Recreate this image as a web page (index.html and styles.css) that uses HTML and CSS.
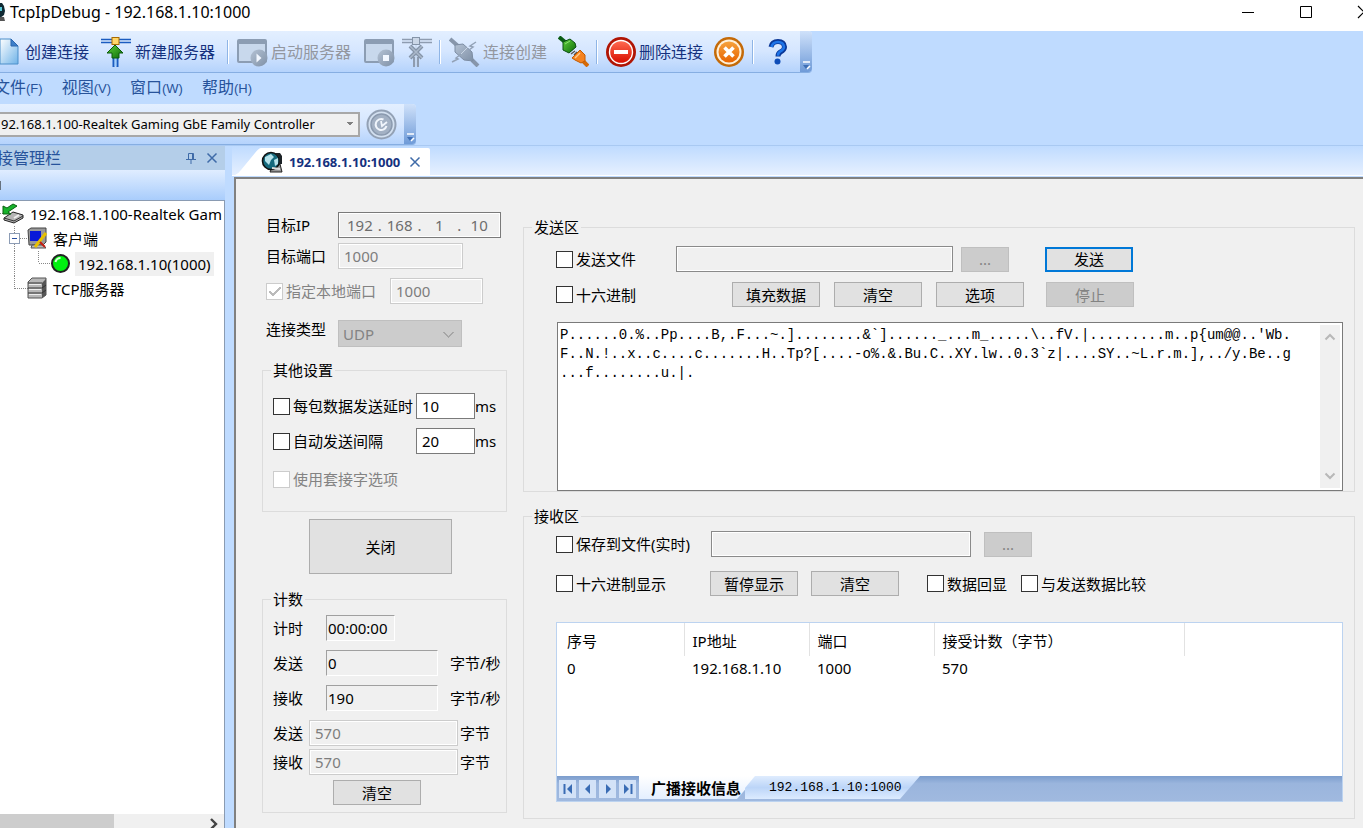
FILE: index.html
```html
<!DOCTYPE html>
<html lang="zh-CN">
<head>
<meta charset="utf-8">
<title>TcpIpDebug - 192.168.1.10:1000</title>
<link rel="stylesheet" href="styles.css">
</head>
<body>
<svg width="0" height="0" class="defs" aria-hidden="true">
  <defs>
    <linearGradient id="page" x1="0" y1="0" x2="1" y2="1"><stop offset="0" stop-color="#fff"/><stop offset="1" stop-color="#6fb3e8"/></linearGradient>
    <linearGradient id="green" x1="0" y1="0" x2="1" y2="1"><stop offset="0" stop-color="#5fd03a"/><stop offset="1" stop-color="#0c6b0a"/></linearGradient>
    <linearGradient id="red" x1="0" y1="0" x2="0" y2="1"><stop offset="0" stop-color="#ff6a50"/><stop offset="1" stop-color="#d80f00"/></linearGradient>
    <linearGradient id="orange" x1="0" y1="0" x2="0" y2="1"><stop offset="0" stop-color="#f6a23c"/><stop offset="1" stop-color="#e86400"/></linearGradient>
    <linearGradient id="grey" x1="0" y1="0" x2="1" y2="1"><stop offset="0" stop-color="#b4c2d4"/><stop offset="1" stop-color="#7f90a6"/></linearGradient>
  </defs>
</svg>

<header class="titlebar">
  <svg class="app-icon" width="6" height="22" viewBox="0 0 6 22"><path d="M0 2h2l2 3 1 5-1 4-4 3z" fill="#102a33"/><path d="M0 6h2v4H0z" fill="#58c8d8"/><path d="M0 16h4l1 4H0z" fill="#555"/></svg>
  <h1 class="title">TcpIpDebug - 192.168.1.10:1000</h1>
  <div class="window-buttons">
    <button type="button" aria-label="最小化"><svg width="14" height="14"><path d="M1 7.500h12" stroke="#000"/></svg></button>
    <button type="button" aria-label="最大化"><svg width="14" height="14"><path d="M1.500 1.500h11v11h-11z" fill="none" stroke="#000"/></svg></button>
    <button type="button" aria-label="关闭窗口"><svg width="14" height="14"><path d="M1 1l12 12M13 1L1 13" stroke="#000" stroke-width="1.200"/></svg></button>
  </div>
</header>

<div class="toolbar main-toolbar" role="toolbar">
  <button type="button" class="tool new-conn"><svg width="19" height="30" viewBox="0 0 19 30"><path d="M0 2h11l7 7v18H0z" fill="url(#page)" stroke="#4d8fca"/><path d="M11 2v7h7z" fill="#3d7fc9" stroke="#2c66ae"/></svg>创建连接</button>
  <button type="button" class="tool new-server"><svg width="30" height="30" viewBox="0 0 30 30"><path d="M0 2.500h30M0 5.500h30" stroke="#1b5cc0" stroke-width="1.600"/><path d="M12.500 20v10M16.500 20v10" stroke="#1b5cc0" stroke-width="2"/><path d="M14.500 8v21" stroke="#9fd0ff" stroke-width="1.500"/><rect x="11" y=".5" width="7" height="7" fill="#ffd76a" stroke="#a86b00"/><path d="M14 8l8 8h-4v5h-7v-5H6z" fill="url(#green)" stroke="#0a5a0a"/></svg>新建服务器</button>
  <span class="sep"></span>
  <button type="button" class="tool start" disabled><svg width="31" height="30" viewBox="0 0 31 30"><rect x="1" y="3" width="28" height="22" rx="1" fill="#c8d8ec" stroke="#8c9db3" stroke-width="2"/><path d="M1 5h28" stroke="#8c9db3" stroke-width="4"/><circle cx="22" cy="21" r="8.500" fill="url(#grey)"/><path d="M19.500 16.500l5 4.500-5 4.500z" fill="#f2f7ff"/></svg>启动服务器</button>
  <button type="button" class="tool icon-a" disabled aria-label="停止服务器"><svg width="31" height="30" viewBox="0 0 31 30"><rect x="1" y="3" width="28" height="22" rx="1" fill="#c8d8ec" stroke="#8c9db3" stroke-width="2"/><path d="M1 5h28" stroke="#8c9db3" stroke-width="4"/><circle cx="22" cy="21" r="8.500" fill="url(#grey)"/><rect x="19" y="18" width="6" height="6" fill="#f2f7ff"/></svg></button>
  <button type="button" class="tool icon-b" disabled aria-label="删除服务器"><svg width="30" height="30" viewBox="0 0 30 30"><path d="M0 2.500h30M0 5.500h30" stroke="#8e9cb0" stroke-width="1.600"/><path d="M12 20v10M16 20v10" stroke="#8e9cb0" stroke-width="2"/><path d="M14 8v21" stroke="#c2d0e2"/><rect x="10.500" y=".5" width="7" height="7" fill="#cbd7e7" stroke="#8594a8"/><path d="M8 9l12 12M20 9L8 21" stroke="#8594a8" stroke-width="4"/><path d="M8 9l12 12M20 9L8 21" stroke="#aab8ca" stroke-width="1.500"/></svg></button>
  <span class="sep"></span>
  <button type="button" class="tool link" disabled><svg width="31" height="30" viewBox="0 0 31 30"><path d="M1 2l8 7M23 23l6 6" stroke="#8796ab" stroke-width="4"/><path d="M6 8l8-1 9 8 1 9-9-1-9-8z" fill="url(#grey)" stroke="#7d8da3"/><path d="M10 19l9-9" stroke="#c9d5e4"/><path d="M27 5l-6 4 3 1-4 3M3 25l6-3-2-1 5-4" fill="none" stroke="#93a2b7" stroke-width="1.500"/></svg>连接创建</button>
  <button type="button" class="tool unlink" aria-label="断开连接"><svg width="31" height="31" viewBox="0 0 31 31"><path d="M1 1l6 5" stroke="#0b5d14" stroke-width="4"/><path d="M11 16l4-3M13 18l4-3M16 19l3-3" stroke="#555" stroke-width="1.400"/><path d="M5 6l7-3 5 4 1 4-7 6-6-3z" fill="url(#green)" stroke="#0a4f12"/><path d="M7 8l5-3" stroke="#8be070"/><path d="M24 24l6 6" stroke="#d56a08" stroke-width="4"/><path d="M22 14l5 5v6l-4 2-6-3-3-2z" fill="#f58220" stroke="#c25a00"/><path d="M22 17l-5 5" stroke="#ffc98c" stroke-width="1.500"/></svg></button>
  <span class="sep"></span>
  <button type="button" class="tool delete"><svg width="30" height="30" viewBox="0 0 30 30"><circle cx="15" cy="15" r="15" fill="#b01505"/><circle cx="15" cy="15" r="12.200" fill="#fff"/><circle cx="15" cy="15" r="10.800" fill="url(#red)"/><path d="M8 15h14" stroke="#fff" stroke-width="4"/></svg>删除连接</button>
  <button type="button" class="tool icon-c" aria-label="全部删除"><svg width="30" height="30" viewBox="0 0 30 30"><circle cx="15" cy="15" r="15" fill="#c46a08"/><circle cx="15" cy="15" r="12.500" fill="#fff0d8"/><circle cx="15" cy="15" r="10.500" fill="url(#orange)"/><path d="M10.500 10.500l9 9M19.500 10.500l-9 9" stroke="#fff" stroke-width="3.600"/></svg></button>
  <span class="sep"></span>
  <button type="button" class="tool help" aria-label="帮助"><svg width="20" height="26" viewBox="0 0 20 26"><path d="M3 8q1-5.500 7-5.500T16.500 8q0 3-4 5-2.500 1.500-2.500 4.500" fill="none" stroke="#0a3796" stroke-width="5"/><path d="M3.500 8Q4.500 3 10 3t6 5q0 2.500-4 4.700-2 1.300-2 4" fill="none" stroke="#1e74e8" stroke-width="2.600"/><circle cx="9.500" cy="22.500" r="3" fill="#0f4db8"/></svg></button>
  <span class="grip"><svg width="12" height="12" viewBox="0 0 12 12"><path d="M3 2h7" stroke="#fff" stroke-width="1.500"/><path d="M3 5h6l-3 4z" fill="#3f6fb5"/><path d="M7 9l3-3" stroke="#fff" stroke-width="1.500"/></svg></span>
</div>

<nav class="menu">
  <a href="#">文件<small>(F)</small></a>
  <a href="#">视图<small>(V)</small></a>
  <a href="#">窗口<small>(W)</small></a>
  <a href="#">帮助<small>(H)</small></a>
</nav>

<div class="toolbar adapter-toolbar">
  <select class="adapter" aria-label="网卡"><option>92.168.1.100-Realtek Gaming GbE Family Controller</option></select>
  <button type="button" class="tool refresh" disabled aria-label="刷新"><svg width="31" height="31" viewBox="0 0 31 31"><circle cx="15.500" cy="15.500" r="14" fill="#d3e0f0" stroke="#93a1b5" stroke-width="2"/><circle cx="15.500" cy="15.500" r="10.500" fill="#a3b1c4" stroke="#8b9aaf" stroke-width="1.500"/><path d="M20.500 17a5.500 5.500 0 1 1-3-6.500" fill="none" stroke="#f0f5fc" stroke-width="2"/><path d="M15 12l1 5 5-4" fill="none" stroke="#f0f5fc" stroke-width="1.800"/></svg></button>
  <span class="grip"><svg width="12" height="12" viewBox="0 0 12 12"><path d="M3 2h7" stroke="#fff" stroke-width="1.500"/><path d="M3 5h6l-3 4z" fill="#3f6fb5"/><path d="M7 9l3-3" stroke="#fff" stroke-width="1.500"/></svg></span>
</div>

<div class="workspace">
  <aside class="sidebar">
    <div class="side-head">
      <h2>接管理栏</h2>
      <button type="button" aria-label="固定"><svg width="12" height="12" viewBox="0 0 12 12"><path d="M3.500 7V1.500h5V7M1 7.500h10M6 8v4" fill="none" stroke="#3f6ba8"/><path d="M7.500 2v5" stroke="#3f6ba8"/></svg></button>
      <button type="button" aria-label="关闭栏"><svg width="12" height="12" viewBox="0 0 12 12"><path d="M1.500 1.500l9 9M10.500 1.500l-9 9" stroke="#3f6ba8" stroke-width="1.500"/></svg></button>
    </div>
    <div class="side-tools"><i></i></div>
    <div class="tree-box">
      <ul class="tree">
        <li><svg width="28" height="25" viewBox="0 0 28 25"><path d="M0 12.500h4" stroke="#888" stroke-dasharray="1 1"/><path d="M4 17l9-6 10 3v3l-9 5-10-3z" fill="#b5b5b5" stroke="#222"/><path d="M4 17l10 3 9-5" fill="none" stroke="#333"/><path d="M14 17l5-3" stroke="#eee" stroke-width="2"/><path d="M3 5v8h8l-3-2 9-6-4-2-6 4z" fill="#18b32c" stroke="#08600f"/></svg><span>192.168.1.100-Realtek Gam</span></li>
        <li><svg width="51" height="25" viewBox="0 0 51 25"><path d="M14.500 0v25M20 12.500h8" stroke="#888" stroke-dasharray="1 1"/><rect x="9.500" y="7.500" width="10" height="10" fill="#fff" stroke="#8c9cb5"/><path d="M12 12.500h5" stroke="#2a4fa0"/><path d="M28 4l3-2h15v14l-3 3H29z" fill="#999" stroke="#444"/><path d="M30 5h11v10H30z" fill="#0818d8"/><path d="M32 19h11l3 3H31z" fill="#bbb" stroke="#555"/><path d="M35 21L46 7" stroke="#e8c000" stroke-width="3"/><path d="M40 16l5 5" stroke="#c41d10" stroke-width="2"/></svg><span>客户端</span></li>
        <li><svg width="73" height="25" viewBox="0 0 73 25"><path d="M14.500 0v25M38.500 0v12M39 12.500h13" stroke="#888" stroke-dasharray="1 1"/><circle cx="60.500" cy="12.500" r="8.500" fill="#00f010" stroke="#222" stroke-width="2"/><path d="M55.500 11q1-4 5-4" stroke="#d8ffd8" stroke-width="2" fill="none"/></svg><span class="selected">192.168.1.10(1000)</span></li>
        <li><svg width="51" height="25" viewBox="0 0 51 25"><path d="M14.500 0v13M15 12.500h13" stroke="#888" stroke-dasharray="1 1"/><path d="M28 6l4-4h14v17l-4 3H28z" fill="#b8b8b8" stroke="#555"/><path d="M42 7l4-4v16l-4 3z" fill="#555"/><path d="M28 7h14M28 12h14l4-3M28 17h14l4-3" stroke="#333" fill="none"/><path d="M29 8.500h12M29 13.500h12M29 18.500h12" stroke="#eee"/></svg><span>TCP服务器</span></li>
      </ul>
      <div class="hscroll"><i></i><svg width="10" height="12" viewBox="0 0 10 12"><path d="M2 1l5 5-5 5" fill="none" stroke="#444" stroke-width="2.400"/></svg></div>
    </div>
  </aside>

  <main class="document">
    <div class="doc-tabs">
      <svg class="slope" width="26" height="27" viewBox="0 0 26 27"><path d="M0 27Q3 26 6 22L20 5Q24 0 26 0V27z" fill="#fff"/></svg>
      <div class="doc-tab">
        <svg width="22" height="22" viewBox="0 0 22 22"><path d="M12 14l7-1 2 8H9z" fill="#999" stroke="#222"/><circle cx="10" cy="10" r="8.500" fill="#15697c" stroke="#111" stroke-width="1.600"/><path d="M4 6l6-3 3 3-3 3-2 5-4-4zM13 9l4-2v6l-3 2z" fill="#b6e2ea"/><path d="M13 2h6l2 3v8h-3V6z" fill="#1b2226"/><path d="M11 17l8 1" stroke="#ddd" stroke-width="2"/></svg>
        <a href="#">192.168.1.10:1000</a>
        <button type="button" aria-label="关闭标签"><svg width="12" height="12" viewBox="0 0 12 12"><path d="M1.500 1.500l9 9M10.500 1.500l-9 9" stroke="#3f6ba8" stroke-width="1.500"/></svg></button>
      </div>
    </div>

    <div class="panel">
      <form class="left">
        <div class="target">
          <span>目标IP</span>
          <div class="ip"><input aria-label="IP 第1段" value="192" disabled>.<input aria-label="IP 第2段" value="168" disabled>.<input aria-label="IP 第3段" value="1" disabled>.<input aria-label="IP 第4段" value="10" disabled></div>
        </div>
        <div class="target port"><label for="port">目标端口</label><input id="port" class="field w-port" value="1000" disabled></div>
        <div class="target local"><label class="check off"><input type="checkbox" checked disabled>指定本地端口</label><input class="field w-local" aria-label="本地端口" value="1000" disabled></div>
        <div class="target type"><label for="type">连接类型</label><select id="type" class="type-select" disabled><option>UDP</option></select></div>

        <fieldset class="group settings">
          <legend>其他设置</legend>
          <div class="row"><label class="check"><input type="checkbox">每包数据发送延时</label><input class="field small" aria-label="延时" value="10">ms</div>
          <div class="row"><label class="check"><input type="checkbox">自动发送间隔</label><input class="field small" aria-label="间隔" value="20">ms</div>
          <div class="row"><label class="check off"><input type="checkbox" disabled>使用套接字选项</label></div>
        </fieldset>

        <button type="button" class="btn close-btn">关闭</button>

        <fieldset class="group counts">
          <legend>计数</legend>
          <div class="row"><label for="t">计时</label><output id="t" class="sunken time">00:00:00</output></div>
          <div class="row"><label for="s">发送</label><output id="s" class="sunken">0</output><span class="rate">字节/秒</span></div>
          <div class="row"><label for="r">接收</label><output id="r" class="sunken">190</output><span class="rate">字节/秒</span></div>
          <div class="row total"><label for="ts">发送</label><input id="ts" class="field" value="570" disabled>字节</div>
          <div class="row total"><label for="tr">接收</label><input id="tr" class="field" value="570" disabled>字节</div>
          <button type="button" class="btn">清空</button>
        </fieldset>
      </form>

      <div class="right">
        <fieldset class="group send">
          <legend>发送区</legend>
          <div class="row"><label class="check c1"><input type="checkbox">发送文件</label><input class="field file" aria-label="发送文件路径" disabled><button type="button" class="btn browse" disabled>...</button><button type="button" class="btn primary">发送</button></div>
          <div class="row r2"><label class="check c2"><input type="checkbox">十六进制</label><button type="button" class="btn">填充数据</button><button type="button" class="btn">清空</button><button type="button" class="btn">选项</button><button type="button" class="btn stop" disabled>停止</button></div>
          <div class="editor">
            <textarea aria-label="发送数据" spellcheck="false">P......0.%..Pp....B,.F...~.]........&amp;`]......_...m_.....\..fV.|.........m..p{um@@..'Wb.
F..N.!..x..c....c.......H..Tp?[....-o%.&amp;.Bu.C..XY.lw..0.3`z|....SY..~L.r.m.],../y.Be..g
...f........u.|.</textarea>
            <div class="vscroll"><svg width="12" height="8" viewBox="0 0 12 8"><path d="M1.500 6.500L6 2l4.500 4.500" fill="none" stroke="#b8b8b8" stroke-width="2"/></svg><svg width="12" height="8" viewBox="0 0 12 8"><path d="M1.500 1.500L6 6l4.500-4.500" fill="none" stroke="#b8b8b8" stroke-width="2"/></svg></div>
          </div>
        </fieldset>

        <fieldset class="group receive">
          <legend>接收区</legend>
          <div class="row"><label class="check c3"><input type="checkbox">保存到文件(实时)</label><input class="field save" aria-label="保存路径" disabled><button type="button" class="btn browse" disabled>...</button></div>
          <div class="row r2"><label class="check c4"><input type="checkbox">十六进制显示</label><button type="button" class="btn">暂停显示</button><button type="button" class="btn">清空</button><label class="check echo"><input type="checkbox">数据回显</label><label class="check"><input type="checkbox">与发送数据比较</label></div>
          <div class="grid">
            <div class="grid-body">
              <table>
                <colgroup><col class="k1"><col class="k2"><col class="k2"><col class="k3"><col></colgroup>
                <thead><tr><th><span>序号</span></th><th><span>IP地址</span></th><th><span>端口</span></th><th><span>接受计数（字节）</span></th><th></th></tr></thead>
                <tbody><tr><td>0</td><td>192.168.1.10</td><td>1000</td><td>570</td><td></td></tr></tbody>
              </table>
            </div>
            <div class="sheet-bar">
              <button type="button" aria-label="首页"><svg width="12" height="12"><path d="M2.500 1v10" stroke="#3a6cb4" stroke-width="2"/><path d="M10 1v10L5 6z" fill="#3a6cb4"/></svg></button>
              <button type="button" aria-label="上一页"><svg width="12" height="12"><path d="M8 1v10L3 6z" fill="#3a6cb4"/></svg></button>
              <button type="button" aria-label="下一页"><svg width="12" height="12"><path d="M4 1v10l5-5z" fill="#3a6cb4"/></svg></button>
              <button type="button" aria-label="末页"><svg width="12" height="12"><path d="M9.500 1v10" stroke="#3a6cb4" stroke-width="2"/><path d="M2 1v10l5-5z" fill="#3a6cb4"/></svg></button>
              <a href="#" class="sheet active">广播接收信息</a>
              <a href="#" class="sheet other">192.168.1.10:1000</a>
            </div>
          </div>
        </fieldset>
      </div>
    </div>
  </main>
</div>
</body>
</html>
```
FILE: styles.css
```css
* { box-sizing: border-box; }
html, body { height: 100%; }
body {
  margin: 0;
  display: flex;
  flex-direction: column;
  overflow: hidden;
  background: #bfdbff;
  color: #000;
  font: 15px/18px "Noto Sans", "Noto Sans CJK SC", sans-serif;
}
button, input, select, textarea { font: inherit; color: inherit; margin: 0; }
button { padding: 0; border: 0; background: none; }
svg { display: block; flex: none; }
a { color: inherit; text-decoration: none; }
h1, h2 { margin: 0; font-weight: 400; }
ul { margin: 0; padding: 0; list-style: none; }
.defs { position: absolute; }

.titlebar { flex: none; height: 31px; display: flex; align-items: center; background: #fff; padding-bottom: 7px; overflow: hidden; }
.app-icon { margin-right: 4px; }
.title { font-size: 16px; flex: 1; }
.window-buttons { display: flex; gap: 44px; margin-right: -8px; }

.toolbar {
  flex: none;
  display: flex;
  align-items: center;
  align-self: flex-start;
  height: 42px;
  background: linear-gradient(#e3efff, #d5e6ff 50%, #b5d3fc);
  border-bottom: 1px solid #86aee2;
  border-radius: 0 4px 4px 0;
}
.adapter-toolbar { height: 41px; }
.tool { display: flex; align-items: center; font-size: 16px; color: #15317e; white-space: nowrap; }
.tool:disabled { color: #93979f; }
.new-conn svg { margin-right: 6px; }
.new-server { margin-left: 12px; }
.new-server svg { margin-right: 4px; }
.sep { width: 2px; height: 24px; background: #8fb5e6; border-right: 1px solid #fff; margin: 0 8px 0 12px; }
.start svg { margin-right: 3px; }
.icon-a { margin-left: 13px; }
.icon-b { margin-left: 7px; }
.icon-b + .sep { margin-left: 7px; }
.link svg, .delete svg { margin-right: 3px; }
.unlink { margin-left: 11px; }
.unlink + .sep { margin-left: 7px; }
.icon-c { margin-left: 11px; }
.icon-c + .sep { margin-left: 8px; }
.help { margin: 0 12px 0 6px; }
.grip { align-self: stretch; width: 12px; display: flex; align-items: flex-end; background: linear-gradient(#cfe1fa, #6f9bd8); border-radius: 0 4px 4px 0; }

.menu { flex: none; display: flex; gap: 19px; height: 31px; align-items: center; padding-bottom: 3px; color: #27539b; font-size: 16px; margin-left: -6px; }
.menu small { font: 13px "Liberation Sans", sans-serif; }

.adapter {
  appearance: none;
  width: 360px;
  height: 25px;
  padding: 0 0 0 1px;
  border: 2px solid #a8a8a8;
  border-left: 0;
  border-radius: 0;
  font-size: 13px;
  background: linear-gradient(#808080, #808080) 347px 8px / 6px 1px no-repeat, linear-gradient(#808080, #808080) 348px 9px / 4px 1px no-repeat, linear-gradient(#808080, #808080) 349px 10px / 2px 1px no-repeat, #f0f0f0;
}
.refresh { margin: 0 7px 0 6px; }

.workspace { flex: 1; min-height: 0; display: flex; gap: 7px; border-top: 1px solid #a9c9f2; }
.sidebar { flex: none; width: 225px; display: flex; flex-direction: column; }
.side-head { height: 24px; display: flex; align-items: center; gap: 9px; padding-right: 7px; background: #b4cee9; color: #27539b; overflow: hidden; }
.side-head h2 { flex: 1; font-size: 16px; white-space: nowrap; margin-left: -3px; }
.side-tools { height: 31px; background: linear-gradient(#e0edff, #a9cdfc); border-bottom: 1px solid #8a9bb2; display: flex; align-items: center; }
.side-tools i { width: 1px; height: 9px; background: #66727f; }
.tree-box { flex: 1; display: flex; flex-direction: column; justify-content: space-between; background: #fff; border-right: 1px solid #8a9bb2; overflow: hidden; }
.tree li { display: flex; align-items: center; height: 25px; white-space: nowrap; }
.tree span { padding: 3px 2px; }
.tree .selected { background: #f0f0f0; margin-left: 2px; padding: 3px; }
.hscroll { height: 14px; display: flex; justify-content: space-between; background: #f0f0f0; padding-right: 5px; overflow: hidden; }
.hscroll i { width: 114px; background: #cdcdcd; }
.hscroll svg { margin-top: 4px; }

.document { flex: 1; min-width: 0; display: flex; flex-direction: column; }
.doc-tabs { height: 30px; display: flex; align-items: flex-end; background: linear-gradient(#bfdbff, #e6f0ff); border-bottom: 1px solid #fff; padding-left: 3px; }
.doc-tab { height: 27px; display: flex; align-items: center; background: #fff; padding-right: 9px; border-radius: 0 2px 0 0; }
.doc-tab a { margin: 0 9px 0 6px; font-size: 13px; font-weight: 700; color: #15317e; }
.panel { flex: 1; display: flex; align-items: flex-start; gap: 16px; background: #f0f0f0; border: solid #808080; border-width: 2px 0 0 2px; margin: 1px 0 0 2px; padding: 33px 8px 0 26px; }

.left { flex: none; width: 245px; display: flex; flex-direction: column; }
.right { flex: 1; min-width: 0; display: flex; flex-direction: column; gap: 15px; padding-top: 6px; }
.target { display: flex; align-items: center; padding-left: 4px; }
.target > :first-child { width: 72px; }
.port { margin-top: 5px; }
.target.local { margin-top: 9px; }
.target.local > .check { width: 124px; }
.type { align-items: flex-start; margin-top: 16px; margin-bottom: 14px; }
.ip { width: 163px; height: 26px; display: flex; align-items: center; border: 1px solid #7a7a7a; padding: 0 3px; color: #6d6d6d; outline: 1px solid #fff; outline-offset: -2px; }
.ip input { flex: 1; min-width: 0; padding: 0; border: 0; background: none; text-align: center; color: #6d6d6d; }
.field { height: 26px; padding: 0 5px; border: 1px solid #7a7a7a; border-radius: 0; background: #fff; }
.field:disabled { color: #7d7d7d; background: #f0f0f0; border-color: #ccc; box-shadow: inset 0 0 0 1px #fff; }
.w-port { width: 125px; }
.w-local { width: 93px; }
.type-select { appearance: none; width: 124px; height: 27px; padding: 0 4px; border: 1px solid #bfbfbf; border-radius: 0; color: #838383; background-color: #ccc; opacity: 1; background-image: linear-gradient(45deg, transparent 46%, #a6a6a6 46%, #a6a6a6 60%, transparent 60%), linear-gradient(-45deg, transparent 46%, #a6a6a6 46%, #a6a6a6 60%, transparent 60%); background-repeat: no-repeat; background-size: 6px 6px; background-position: 104px 11px, 109px 11px; }

.check { display: flex; align-items: center; gap: 3px; white-space: nowrap; }
.check.off { color: #838383; }
.check input { appearance: none; flex: none; width: 17px; height: 17px; border: 1px solid #333; background: #fff; }
.check input:disabled { border-color: #ccc; }
.check input:checked { background: linear-gradient(135deg, transparent 44%, #bbb 44%, #bbb 58%, transparent 58%) 5px 3px / 9px 9px no-repeat, linear-gradient(45deg, transparent 40%, #bbb 40%, #bbb 64%, transparent 64%) 2px 7px / 5px 5px no-repeat, #fff; }

.group { min-width: 0; margin: 0; border: 1px solid #dcdcdc; padding: 0 8px; }
.group legend { padding: 0 2px; height: 18px; }
.row { display: flex; align-items: center; white-space: nowrap; }
.settings { padding: 14px 0 19px 8px; }
.settings .row { height: 26px; margin-bottom: 9px; padding-left: 2px; }
.settings .row .check { width: 143px; }
.settings .row:last-child { margin: 12px 0 0; }
.small { width: 59px; }
.btn { width: 88px; height: 25px; border: 1px solid #adadad; background: #e1e1e1; text-align: center; flex: none; }
.btn:disabled { color: #838383; background: #ccc; border-color: #bfbfbf; }
.close-btn { width: 143px; height: 55px; margin: 7px 0 16px 47px; }

.counts { padding: 7px 0 7px 8px; }
.counts .row { height: 26px; margin-bottom: 9px; padding-left: 2px; }
.counts label { width: 53px; }
.sunken { width: 112px; height: 26px; padding: 3px 1px; border: 1px solid; border-color: #a0a0a0 #fff #fff #a0a0a0; }
.sunken.time { width: 69px; }
.rate { margin-left: 12px; }
.counts .total { margin-bottom: 3px; }
.total label { width: 36px; }
.total .field { width: 149px; margin-right: 2px; }
.counts .btn { display: block; margin: 5px 0 0 62px; }

.send { padding: 10px 11px 0 8px; }
.send .row, .receive .row { padding-left: 24px; }
.c1 { width: 120px; }
.c2 { width: 176px; }
.file { width: 277px; }
.file:disabled, .save:disabled { border-color: #8a8a8a; }
.browse { width: 48px; margin-left: 8px; }
.primary { border: 2px solid #0078d7; margin-left: 36px; }
.r2 { margin-top: 10px; }
.send .r2 .btn + .btn { margin-left: 14px; }
.send .r2 .stop.btn { margin-left: 22px; }
.editor { display: flex; height: 169px; margin: 15px 0 0 25px; border: 1px solid #7a7a7a; background: #fff; }
textarea { flex: 1; min-width: 0; resize: none; border: 0; padding: 3px 2px; background: none; white-space: pre; overflow: hidden; font: 14px/19px "Liberation Mono", monospace; }
.vscroll { width: 20px; margin: 2px 2px 2px 0; background: #f0f0f0; display: flex; flex-direction: column; justify-content: space-between; align-items: center; padding: 8px 0; }

.receive { padding: 6px 11px 16px 8px; }
.c3 { width: 155px; }
.c4 { width: 154px; }
.save { width: 260px; }
.save + .browse { margin-left: 13px; }
.receive .r2 { margin-top: 14px; }
.receive .r2 .btn + .btn { margin-left: 13px; }
.echo { margin: 0 14px 0 28px; }
.grid { margin: 26px 0 0 24px; border: 1px solid #bcd3f0; }
.grid-body { background: #fff; height: 153px; }
table { width: 100%; table-layout: fixed; border-collapse: collapse; }
.k1 { width: 127px; }
.k2 { width: 125px; }
.k3 { width: 250px; }
th, td { padding: 0 0 0 8px; text-align: left; font-weight: 400; height: 24px; }
th { padding: 3px 0 0; height: 33px; }
th:not(:last-child) { border-right: 1px solid #e2e2e2; }
th span { padding-left: 8px; }
th:first-child span, td:first-child { padding-left: 10px; }
.sheet-bar { display: flex; align-items: center; height: 25px; gap: 3px; padding-left: 2px; background: linear-gradient(#7c9dcd, #9ab5dd 30%, #a0b9df); }
.sheet-bar button { width: 17px; height: 18px; background: #d3e2f7; display: grid; place-items: center; }
.sheet { display: flex; align-items: center; height: 23px; margin-bottom: 2px; white-space: nowrap; }
.active { width: 118px; padding-left: 12px; background: linear-gradient(#fff, #e4efff); font-weight: 700; clip-path: polygon(0 0, 118px 0, 98px 100%, 0 100%); }
.other { width: 175px; padding-left: 24px; margin-left: -15px; background: linear-gradient(#dfecfe, #bcd5f8 50%, #dcebff); font: 13px/18px "Liberation Mono", monospace; clip-path: polygon(10px 0, 100% 0, 155px 100%, 0 100%, 0 12px); }
```
